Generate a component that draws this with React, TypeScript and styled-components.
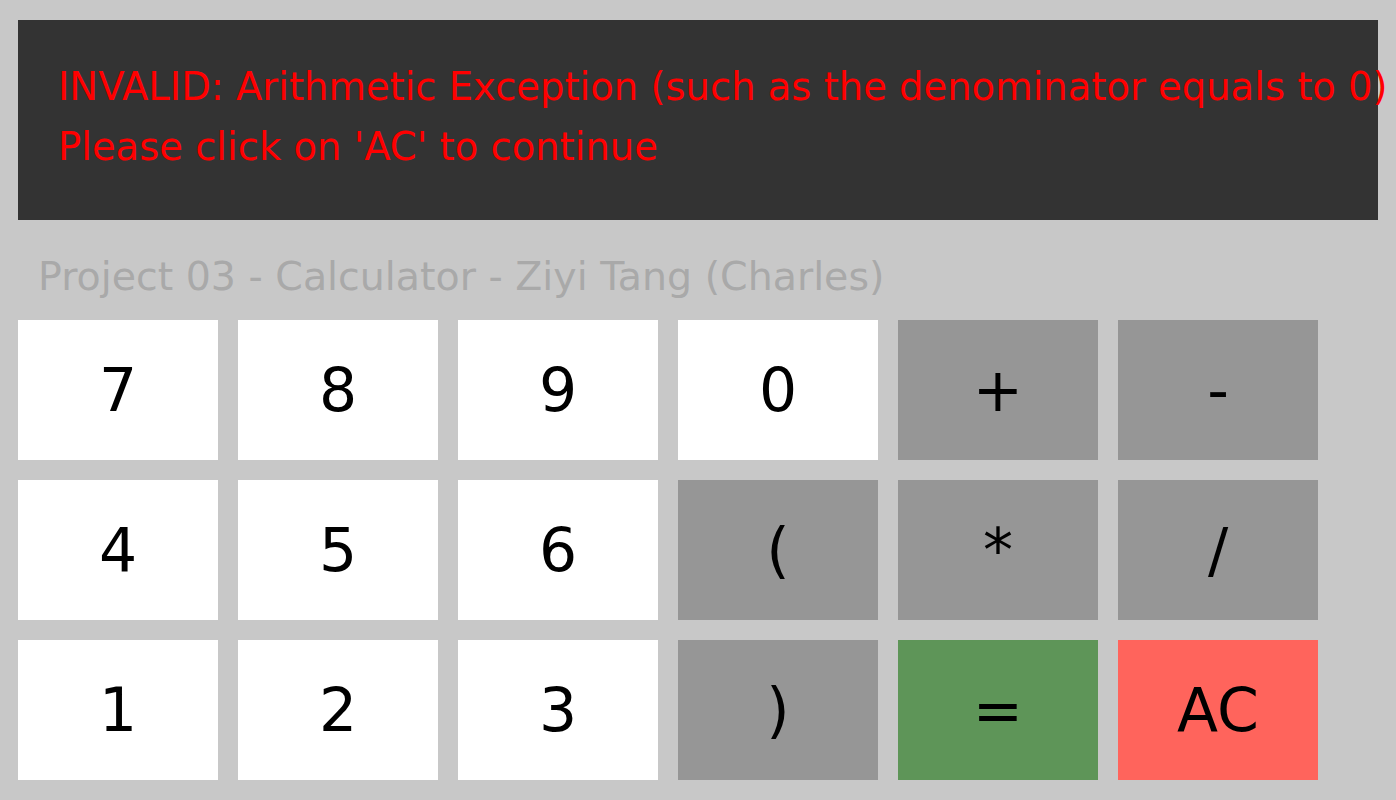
import React from "react";
import styled, { createGlobalStyle } from "styled-components";

const Global = createGlobalStyle`
  html, body { margin: 0; padding: 0; background: #c8c8c8; }
  body { font-family: "DejaVu Sans", "Liberation Sans", sans-serif; }
`;

const Page = styled.div`
  padding: 20px 18px;
  display: flex;
  flex-direction: column;
  width: 1360px;
`;

const Display = styled.div`
  height: 200px;
  background: #333333;
  box-sizing: border-box;
  padding: 37px 0 0 40px;
  color: #ff0000;
  font-size: 38.5px;
  line-height: 60px;
  white-space: nowrap;
`;

const Title = styled.div`
  height: 100px;
  box-sizing: border-box;
  padding: 34px 0 0 20px;
  color: #a9a9a9;
  font-size: 39.5px;
  line-height: 44px;
  white-space: nowrap;
`;

const Keypad = styled.div`
  display: grid;
  grid-template-columns: repeat(6, 200px);
  grid-auto-rows: 140px;
  gap: 20px;
`;

const tones: Record<string, string> = {
  digit: "#ffffff",
  op: "#969696",
  eq: "#5e9558",
  clear: "#ff645c",
};

const Key = styled.div<{ $tone: string }>`
  display: flex;
  align-items: center;
  justify-content: center;
  background: ${(p) => tones[p.$tone]};
  color: #000;
  font-size: 60px;
`;

const keys: [string, string][] = [
  ["7", "digit"], ["8", "digit"], ["9", "digit"], ["0", "digit"], ["+", "op"], ["-", "op"],
  ["4", "digit"], ["5", "digit"], ["6", "digit"], ["(", "op"], ["*", "op"], ["/", "op"],
  ["1", "digit"], ["2", "digit"], ["3", "digit"], [")", "op"], ["=", "eq"], ["AC", "clear"],
];

export default function App() {
  return (
    <>
      <Global />
      <Page>
        <Display>
          <div>INVALID: Arithmetic Exception (such as the denominator equals to 0)</div>
          <div>Please click on 'AC' to continue</div>
        </Display>
        <Title>Project 03 - Calculator - Ziyi Tang (Charles)</Title>
        <Keypad>
          {keys.map(([label, tone]) => (
            <Key key={label} $tone={tone}>{label}</Key>
          ))}
        </Keypad>
      </Page>
    </>
  );
}
